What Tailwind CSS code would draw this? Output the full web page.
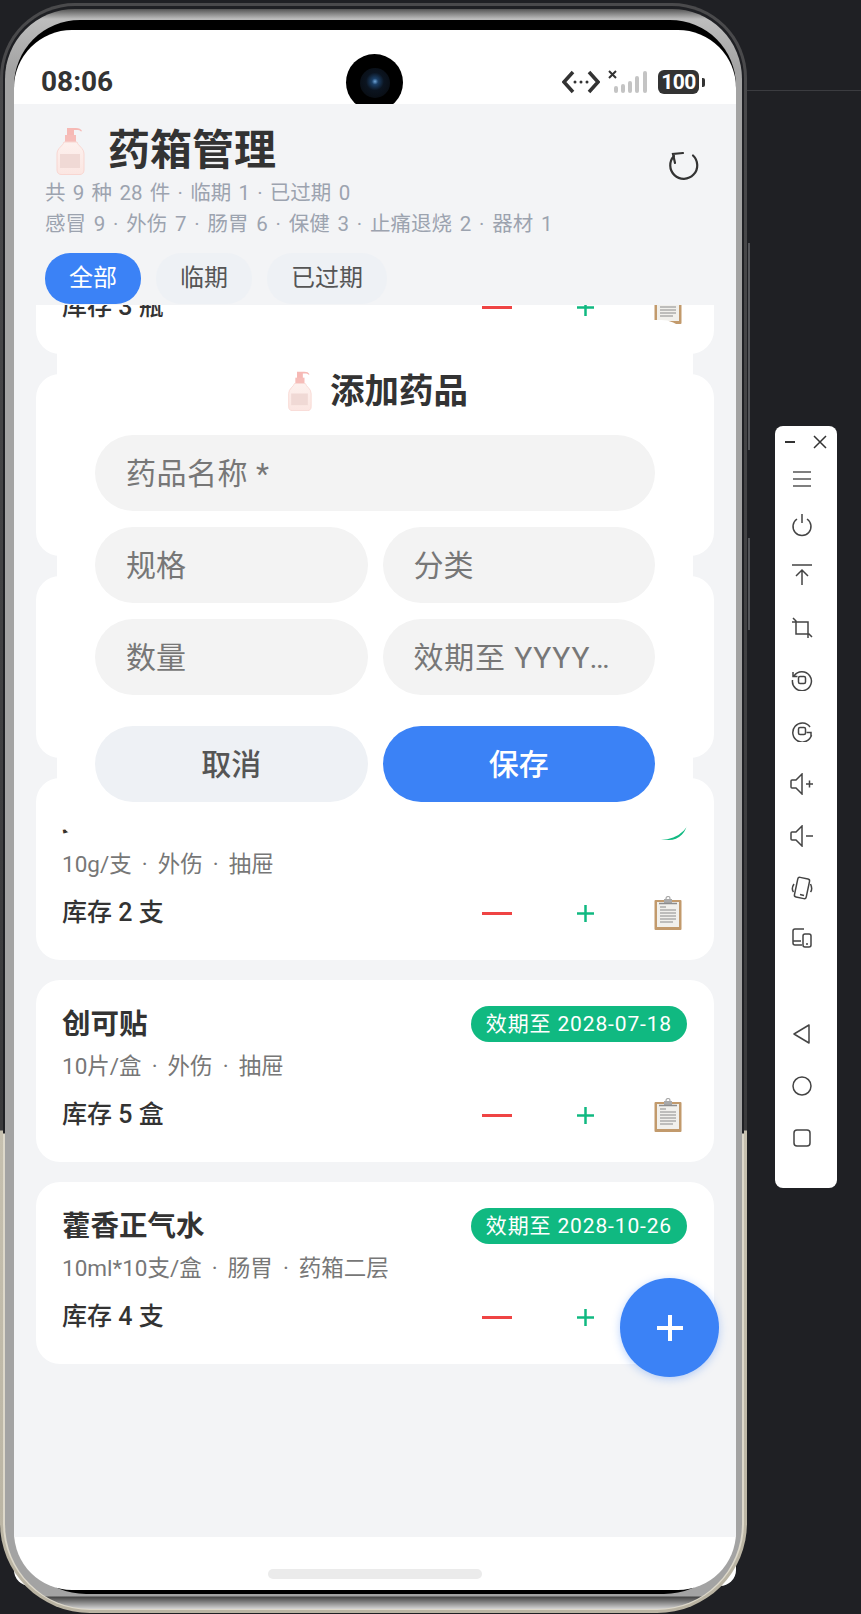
<!DOCTYPE html>
<html lang="zh-CN">
<head>
<meta charset="UTF-8" />
<title>药箱管理</title>
<script src="https://cdn.jsdelivr.net/npm/@tailwindcss/browser@4"></script>
</head>
<body class="bg-[#1f2024] w-[861px] h-[1614px] overflow-hidden font-['Roboto','Noto_Sans_CJK_SC',sans-serif] text-[#333]">

<svg width="0" height="0" class="absolute">
  <defs>
    <linearGradient id="bottleBody" x1="0" y1="0" x2="0" y2="1">
      <stop offset="0" stop-color="#fdf1ee" />
      <stop offset="1" stop-color="#fbe6e2" />
    </linearGradient>
    <symbol id="bottle" viewBox="0 0 30 48">
      <path d="M12 1h9c3 0 5 1 6 3l-1 .5c-1-1.200-2-1.500-5-1.500h-2v6h-7V3h0z" fill="#f6b9b5" />
      <path d="M10 8h11v7H10z" fill="#f6bdb9" />
      <path d="M9 15h13c1 4 7 6 7 12v16c0 3-2 4.500-4 4.500H6c-2 0-4-1.500-4-4.500V27c0-6 6-8 7-12z" fill="url(#bottleBody)" stroke="#f8d6d1" stroke-width="1" />
      <rect x="5" y="27" width="20" height="14" fill="#f0d9d5" />
    </symbol>
    <symbol id="clipboard" viewBox="0 0 28 34">
      <rect x="0.500" y="4" width="27" height="30" rx="1" fill="#c29a6c" />
      <rect x="3" y="6" width="22" height="25" fill="#f1f0ec" />
      <rect x="10" y="3" width="8" height="4" fill="#a9a9a9" />
      <circle cx="14" cy="2.500" r="2" fill="none" stroke="#a9a9a9" stroke-width="1.200" />
      <path d="M5 7.500h18" stroke="#8d8d8d" stroke-width="1.500" />
      <path d="M6 11h6M6 14h16M6 17h16M6 20h16M6 23h16M6 26h13" stroke="#8a8a8a" stroke-width="1" />
    </symbol>
  </defs>
</svg>

<!-- phone shell -->
<div class="absolute left-0 top-[90px] w-full h-px bg-[#3b3c40]"></div>
<div class="absolute left-[14px] top-[1490px] w-[722px] h-[96px] rounded-b-[16px] bg-white"></div>
<div class="absolute left-[748px] top-[243px] w-[2px] h-[207px] bg-[#55565a]"></div>
<div class="absolute left-[748px] top-[538px] w-[2px] h-[92px] bg-[#55565a]"></div>

<div class="relative w-[747px] h-[1610px] mt-[3px] rounded-t-[75px] rounded-b-[90px] p-[3px] bg-[linear-gradient(180deg,#4a4a4c_0,#3a3a3c_1127px,#c6c0af_1128px,#b9b3a2_100%)]">
  <div class="h-full rounded-t-[72px] rounded-b-[87px] pt-[3px] pb-[1px] px-[2px] bg-[linear-gradient(180deg,#1f2024_0,#1f2024_1127px,#ddd8ca_1128px,#ddd8ca_100%)]">
    <div class="h-full rounded-t-[70px] rounded-b-[85px] pt-[11px] pb-[15px] pl-[9px] pr-[6px] bg-[linear-gradient(180deg,#555_0,#bdbdbd_10px,#a3a3a3_60px,#a3a3a3_1587px,#444_1588px,#d4d4d4_100%)]">
      <div class="h-full rounded-t-[66px] rounded-b-[72px] pt-[10px] pb-[4px] bg-black">

        <!-- screen -->
        <div class="relative h-full w-[722px] rounded-[58px] bg-white overflow-hidden flex flex-col">
          <div class="h-[74px] shrink-0 relative flex items-center justify-between pl-[27px] pr-[31px] pt-[30px]">
            <span class="text-[28px] leading-[34px] font-bold text-[#333] font-['Roboto','Noto_Sans_CJK_SC',sans-serif]">08:06</span>
            <div class="flex items-center">
              <svg width="38" height="24" viewBox="0 0 38 24" fill="none" stroke="#333" stroke-width="3.500">
                <path d="M11 2 2 12l9 10M27 2l9 10-9 10" />
                <circle cx="13" cy="12" r="1.500" fill="#333" stroke="none" />
                <circle cx="19" cy="12" r="1.500" fill="#333" stroke="none" />
                <circle cx="25" cy="12" r="1.500" fill="#333" stroke="none" />
              </svg>
              <svg class="ml-[8px]" width="40" height="24" viewBox="0 0 40 24">
                <path d="M1 1l7 7M8 1 1 8" stroke="#333" stroke-width="2" />
                <rect x="6" y="16" width="4" height="7" rx="2" fill="#c4c4c4" />
                <rect x="13" y="14" width="4" height="9" rx="2" fill="#c4c4c4" />
                <rect x="20" y="11" width="4" height="12" rx="2" fill="#c4c4c4" />
                <rect x="27" y="6" width="4" height="17" rx="2" fill="#c4c4c4" />
                <rect x="35" y="1" width="4" height="22" rx="2" fill="#c4c4c4" />
              </svg>
              <div class="ml-[10px] flex items-center">
                <span class="w-[41px] h-[24px] rounded-[6px] bg-[#333] text-white text-[21px] leading-[24px] font-bold text-center tracking-[-0.5px]">100</span>
                <span class="ml-[3px] w-[3px] h-[9px] rounded-r-[2px] bg-[#333]"></span>
              </div>
            </div>
          </div>
          <div class="absolute left-[332px] top-[24px] w-[57px] h-[57px] rounded-full bg-black flex items-center justify-center">
            <div class="w-[30px] h-[30px] rounded-full bg-[radial-gradient(circle_at_50%_45%,#6fa5d8_0,#1b3f66_14%,#0b1420_40%,#07090c_100%)]"></div>
          </div>

          <!-- app -->
          <div class="relative h-[1433px] shrink-0 bg-[#f3f4f6] flex flex-col overflow-hidden">
            <header class="h-[201px] shrink-0 pl-[31px] pr-[30px] pt-[22px] relative z-10">
              <div class="h-[50px] flex items-start justify-between">
                <h1 class="flex items-center h-[50px] text-[42px] leading-[50px] font-bold text-[#333]">
                  <svg class="ml-[10px] mr-[23px]" width="30" height="48"><use href="#bottle" /></svg>
                  药箱管理
                </h1>
                <svg class="mt-[20px]" width="40" height="40" viewBox="0 0 40 40" fill="none" stroke="#333" stroke-width="2.200" stroke-linecap="round">
                  <path d="M27 9.500A13.500 13.500 0 1 1 8 10" />
                  <path d="M17 7 7 8l2 9" />
                </svg>
              </div>
              <p class="text-[20.500px] leading-[31px] mt-[2px] text-[#9ca3af] [word-spacing:2.200px]">共 9 种 28 件 · 临期 1 · 已过期 0</p>
              <p class="text-[20.500px] leading-[31px] text-[#9ca3af] [word-spacing:2.700px]">感冒 9 · 外伤 7 · 肠胃 6 · 保健 3 · 止痛退烧 2 · 器材 1</p>
              <div class="flex gap-[15px] mt-[13px]">
                <button class="h-[51px] px-[24px] rounded-[25px] bg-[#3b82f6] text-white text-[24px] leading-[51px]">全部</button>
                <button class="h-[51px] px-[24px] rounded-[25px] bg-[#eef1f5] text-[#555] text-[24px] leading-[51px]">临期</button>
                <button class="h-[51px] px-[24px] rounded-[25px] bg-[#eef1f5] text-[#555] text-[24px] leading-[51px]">已过期</button>
              </div>
            </header>

            <div class="flex-1 overflow-hidden px-[22px]">
              <div id="list" class="flex flex-col gap-[20px] -mt-[133px]"></div>
            </div>

            <!-- add medicine dialog -->
            <div class="absolute left-[43px] top-[216px] w-[636px] h-[520px] rounded-[32px] bg-white px-[38px] pt-[49px] z-20">
              <h2 class="h-[44px] pl-[5px] flex items-center justify-center text-[34.500px] leading-[44px] font-bold text-[#333]">
                <svg class="mr-[18px]" width="25" height="40"><use href="#bottle" /></svg>
                添加药品
              </h2>
              <div class="mt-[22px] flex flex-col gap-[16px]">
                <input placeholder="药品名称 *" class="w-full h-[76px] rounded-[38px] bg-[#f3f3f3] px-[31px] text-[30px] tracking-[0.5px] placeholder:text-[#777] truncate" />
                <div class="grid grid-cols-2 gap-[15px]">
                  <input placeholder="规格" class="min-w-0 h-[76px] rounded-[38px] bg-[#f3f3f3] px-[31px] text-[30px] placeholder:text-[#777] truncate" />
                  <input placeholder="分类" class="min-w-0 h-[76px] rounded-[38px] bg-[#f3f3f3] px-[31px] text-[30px] placeholder:text-[#777] truncate" />
                </div>
                <div class="grid grid-cols-2 gap-[15px]">
                  <input placeholder="数量" class="min-w-0 h-[76px] rounded-[38px] bg-[#f3f3f3] px-[31px] text-[30px] placeholder:text-[#777] truncate" />
                  <input placeholder="效期至 YYYY-MM-DD" class="min-w-0 h-[76px] rounded-[38px] bg-[#f3f3f3] pl-[31px] pr-[44px] text-[30px] tracking-[0.8px] placeholder:text-[#777] truncate" />
                </div>
              </div>
              <div class="grid grid-cols-2 gap-[15px] mt-[31px]">
                <button class="h-[76px] rounded-[38px] bg-[#eef1f5] text-[#555] text-[30px] font-medium">取消</button>
                <button class="h-[76px] rounded-[38px] bg-[#3b82f6] text-white text-[30px] font-medium">保存</button>
              </div>
            </div>

            <button class="absolute left-[606px] top-[1174px] w-[99px] h-[99px] rounded-full bg-[#3b82f6] shadow-[0_2px_8px_rgba(59,130,246,0.35)] flex items-center justify-center z-30">
              <svg width="26" height="26" viewBox="0 0 26 26"><path d="M13 0v26M0 13h26" stroke="#fff" stroke-width="4" /></svg>
            </button>
          </div>

          <div class="flex-1 flex justify-center pt-[32px]">
            <div class="w-[214px] h-[10px] rounded-[5px] bg-[#ebebeb]"></div>
          </div>
        </div>

      </div>
    </div>
  </div>
</div>

<!-- emulator toolbar -->
<div class="absolute left-[775px] top-[426px] w-[62px] h-[762px] rounded-[8px] bg-white flex flex-col items-center pr-[9px] text-[#444]">
  <div class="h-[32px] w-full flex items-center justify-between pl-[9px] pr-[1px]">
    <svg width="12" height="12" viewBox="0 0 12 12"><path d="M1 6h10" stroke="#333" stroke-width="2" /></svg>
    <svg width="14" height="14" viewBox="0 0 14 14"><path d="M1 1l12 12M13 1 1 13" stroke="#333" stroke-width="1.500" /></svg>
  </div>
  <div class="h-[42px] flex items-center justify-center">
    <svg width="20" height="18" viewBox="0 0 20 18"><path d="M1 2h18M1 9h18M1 16h18" stroke="#555" stroke-width="1.500" /></svg>
  </div>
  <svg class="mt-[14px]" width="22" height="24" viewBox="0 0 22 24" fill="none" stroke="#444" stroke-width="1.500"><path d="M6 5a9 9 0 1 0 10 0M11 0v9" /></svg>
  <svg class="mt-[26px]" width="22" height="22" viewBox="0 0 22 22" fill="none" stroke="#444" stroke-width="1.500"><path d="M1 1h20M11 21V6M5 12l6-6 6 6" /></svg>
  <svg class="mt-[31px]" width="22" height="22" viewBox="0 0 22 22" fill="none" stroke="#444" stroke-width="1.500"><path d="M2 1l3 3v13h13l3 3M1 5h16v16" /></svg>
  <svg class="mt-[30px]" width="22" height="22" viewBox="0 0 22 22" fill="none" stroke="#444" stroke-width="1.500"><path d="M3 7a9.500 9.500 0 1 1-1.500 4M2 3v4.500h4.500" /><rect x="7.500" y="7.500" width="7" height="7" rx="1.500" /></svg>
  <svg class="mt-[29px]" width="22" height="22" viewBox="0 0 22 22" fill="none" stroke="#444" stroke-width="1.500"><path d="M19 7a9.500 9.500 0 1 0 1.500 8M20 17v-4.500h-4.500" /><rect x="7.500" y="7.500" width="7" height="7" rx="1.500" /></svg>
  <svg class="mt-[31px]" width="24" height="22" viewBox="0 0 24 22" fill="none" stroke="#444" stroke-width="1.500"><path d="M12 1v20L6 15H2a1 1 0 0 1-1-1V8a1 1 0 0 1 1-1h4zM16 11h7M19.500 7.500v7" /></svg>
  <svg class="mt-[30px]" width="24" height="22" viewBox="0 0 24 22" fill="none" stroke="#444" stroke-width="1.500"><path d="M12 1v20L6 15H2a1 1 0 0 1-1-1V8a1 1 0 0 1 1-1h4zM16 11h7" /></svg>
  <svg class="mt-[29px]" width="22" height="24" viewBox="0 0 22 24" fill="none" stroke="#444" stroke-width="1.500"><rect x="5" y="2" width="12" height="20" rx="2" transform="rotate(12 11 12)" /><path d="M9 18.500l4 1M3 8C1 11 1 14 2.500 16M19.500 8c1.500 3 1.500 6 0 8" /></svg>
  <svg class="mt-[28px]" width="20" height="20" viewBox="0 0 20 20" fill="none" stroke="#444" stroke-width="1.500"><path d="M12 1H3a2 2 0 0 0-2 2v12a2 2 0 0 0 2 2h7M1 13h8" /><rect x="11" y="6" width="8" height="13" rx="2" /><path d="M14 16h2" /></svg>
  <svg class="mt-[76px]" width="18" height="20" viewBox="0 0 18 20" fill="none" stroke="#444" stroke-width="1.500" stroke-linejoin="round"><path d="M16 1v18L1 10z" /></svg>
  <svg class="mt-[32px]" width="20" height="20" viewBox="0 0 20 20" fill="none" stroke="#444" stroke-width="1.500"><circle cx="10" cy="10" r="9" /></svg>
  <svg class="mt-[33px]" width="18" height="18" viewBox="0 0 18 18" fill="none" stroke="#444" stroke-width="1.500"><rect x="1" y="1" width="16" height="16" rx="3" /></svg>
</div>

<script>
  const meds = [
    { name: '板蓝根颗粒', meta: '10g*20袋/盒 · 感冒 · 抽屉', stock: '库存 3 瓶', date: '效期至 2028-03-12' },
    { name: '布洛芬缓释胶囊', meta: '0.3g*20粒/盒 · 止痛退烧 · 抽屉', stock: '库存 3 盒', date: '效期至 2028-04-10' },
    { name: '蒙脱石散', meta: '3g*10袋/盒 · 肠胃 · 抽屉', stock: '库存 2 盒', date: '效期至 2028-05-20' },
    { name: '红霉素软膏', meta: '10g/支 · 外伤 · 抽屉', stock: '库存 2 支', date: '效期至 2028-06-30' },
    { name: '创可贴', meta: '10片/盒 · 外伤 · 抽屉', stock: '库存 5 盒', date: '效期至 2028-07-18' },
    { name: '藿香正气水', meta: '10ml*10支/盒 · 肠胃 · 药箱二层', stock: '库存 4 支', date: '效期至 2028-10-26' }
  ];

  document.getElementById('list').innerHTML = meds.map(m => `
    <article class="h-[182px] shrink-0 rounded-[24px] bg-white px-[26px] pt-[26px]">
      <div class="h-[36px] flex items-center justify-between">
        <h3 class="pt-[2px] text-[28.500px] leading-[36px] font-bold text-[#333]">${m.name}</h3>
        <span class="h-[36px] mr-[1px] rounded-[18px] bg-[#10b981] px-[15px] text-white text-[21px] leading-[36px] tracking-[0.85px]">${m.date}</span>
      </div>
      <p class="mt-[9px] text-[22.500px] leading-[30px] text-[#777] [word-spacing:4.500px]">${m.meta}</p>
      <div class="mt-[14px] h-[40px] flex items-center">
        <span class="text-[25px] leading-[40px] font-medium text-[#333] mr-auto">${m.stock}</span>
        <button class="w-[60px] h-[40px] flex items-center justify-center"><span class="w-[30px] h-[3px] bg-[#ef4444]"></span></button>
        <button class="ml-[38px] w-[40px] h-[40px] flex items-center justify-center">
          <svg width="17" height="17" viewBox="0 0 17 17"><path d="M8.500 0v17M0 8.500h17" stroke="#10b981" stroke-width="2.500" /></svg>
        </button>
        <button class="ml-[43px] w-[40px] h-[40px] flex items-center justify-center">
          <svg width="28" height="34"><use href="#clipboard" /></svg>
        </button>
      </div>
    </article>`).join('');
</script>
</body>
</html>
